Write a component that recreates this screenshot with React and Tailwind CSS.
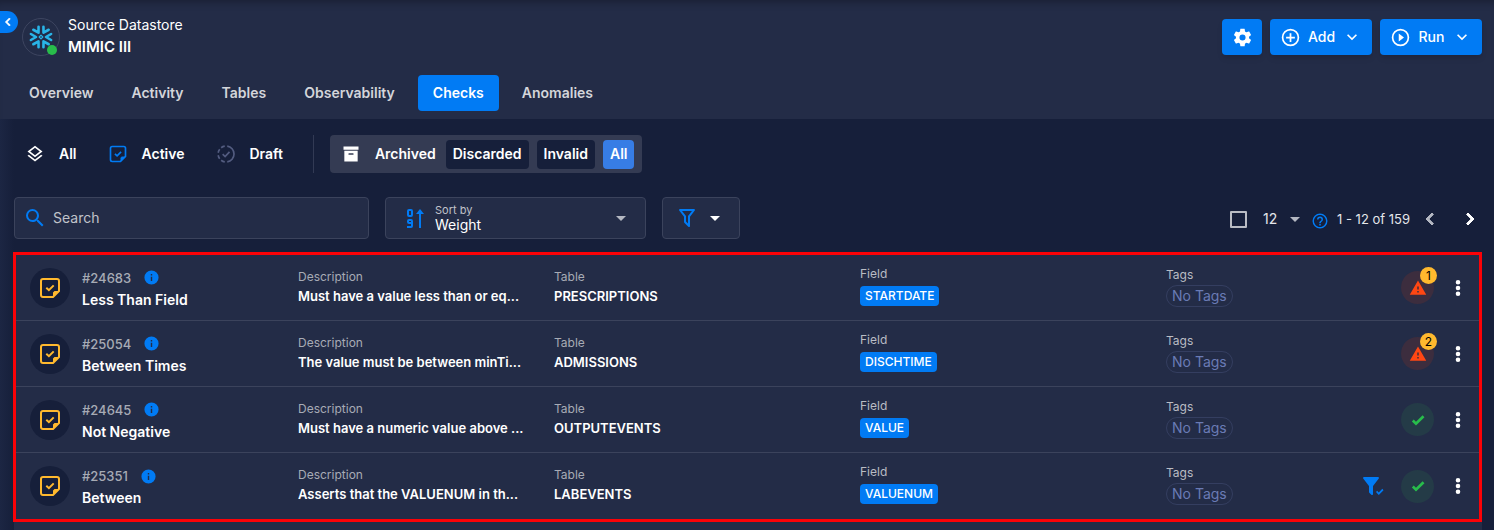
import { useState } from "react";
import { clsx } from "clsx";

const paths = {
  cog: "M12,15.5A3.5,3.5 0 0,1 8.5,12A3.5,3.5 0 0,1 12,8.5A3.5,3.5 0 0,1 15.5,12A3.5,3.5 0 0,1 12,15.5M19.43,12.97C19.47,12.65 19.5,12.33 19.5,12C19.5,11.67 19.47,11.34 19.43,11L21.54,9.37C21.73,9.22 21.78,8.95 21.66,8.73L19.66,5.27C19.54,5.05 19.27,4.96 19.05,5.05L16.56,6.05C16.04,5.66 15.5,5.32 14.87,5.07L14.5,2.42C14.46,2.18 14.25,2 14,2H10C9.75,2 9.54,2.18 9.5,2.42L9.13,5.07C8.5,5.32 7.96,5.66 7.44,6.05L4.95,5.05C4.73,4.96 4.46,5.05 4.34,5.27L2.34,8.73C2.21,8.95 2.27,9.22 2.46,9.37L4.57,11C4.53,11.34 4.5,11.67 4.5,12C4.5,12.33 4.53,12.65 4.57,12.97L2.46,14.63C2.27,14.78 2.21,15.05 2.34,15.27L4.34,18.73C4.46,18.95 4.73,19.03 4.95,18.95L7.44,17.94C7.96,18.34 8.5,18.68 9.13,18.93L9.5,21.58C9.54,21.82 9.75,22 10,22H14C14.25,22 14.46,21.82 14.5,21.58L14.87,18.93C15.5,18.67 16.04,18.34 16.56,17.94L19.05,18.95C19.27,19.03 19.54,18.95 19.66,18.73L21.66,15.27C21.78,15.05 21.73,14.78 21.54,14.63L19.43,12.97Z",
  plusCircle: "M12,20C7.59,20 4,16.41 4,12C4,7.59 7.59,4 12,4C16.41,4 20,7.59 20,12C20,16.41 16.41,20 12,20M12,2A10,10 0 0,0 2,12A10,10 0 0,0 12,22A10,10 0 0,0 22,12A10,10 0 0,0 12,2M13,7H11V11H7V13H11V17H13V13H17V11H13V7Z",
  playCircle: "M12,20C7.59,20 4,16.41 4,12C4,7.59 7.59,4 12,4C16.41,4 20,7.59 20,12C20,16.41 16.41,20 12,20M12,2A10,10 0 0,0 2,12A10,10 0 0,0 12,22A10,10 0 0,0 22,12A10,10 0 0,0 12,2M10,16.5L16,12L10,7.5V16.5Z",
  chevronDown: "M7.41,8.58L12,13.17L16.59,8.58L18,10L12,16L6,10L7.41,8.58Z",
  chevronLeft: "M15.41,16.58L10.83,12L15.41,7.41L14,6L8,12L14,18L15.41,16.58Z",
  chevronRight: "M8.59,16.58L13.17,12L8.59,7.41L10,6L16,12L10,18L8.59,16.58Z",
  layers: "M12,18.54L19.37,12.8L21,14.07L12,21.07L3,14.07L4.62,12.81L12,18.54M12,16L3,9L12,2L21,9L12,16M12,4.53L6.26,9L12,13.47L17.74,9L12,4.53Z",
  magnify: "M9.5,3A6.5,6.5 0 0,1 16,9.5C16,11.11 15.41,12.59 14.44,13.73L14.71,14H15.5L20.5,19L19,20.5L14,15.5V14.71L13.73,14.44C12.59,15.41 11.11,16 9.5,16A6.5,6.5 0 0,1 3,9.5A6.5,6.5 0 0,1 9.5,3M9.5,5C7,5 5,7 5,9.5C5,12 7,14 9.5,14C12,14 14,12 14,9.5C14,7 12,5 9.5,5Z",
  archive: "M3,3H21V7H3V3M4,8H20V21H4V8M9.5,11A0.5,0.5 0 0,0 9,11.5V13H15V11.5A0.5,0.5 0 0,0 14.5,11H9.5Z",
  filter: "M15,19.88C15.04,20.18 14.94,20.5 14.71,20.71C14.32,21.1 13.69,21.1 13.3,20.71L9.29,16.7C9.06,16.47 8.96,16.16 9,15.87V10.75L4.21,4.62C3.87,4.19 3.95,3.56 4.38,3.22C4.57,3.08 4.78,3 5,3V3H19V3C19.22,3 19.43,3.08 19.62,3.22C20.05,3.56 20.13,4.19 19.79,4.62L15,10.75V19.88M7.04,5L11,10.06V15.58L13,17.58V10.05L16.96,5H7.04Z",
  filterCheck: "M12 12V19.88C12.04 20.18 11.94 20.5 11.71 20.71C11.32 21.1 10.69 21.1 10.3 20.71L8.29 18.7C8.06 18.47 7.96 18.16 8 17.87V12H7.97L2.21 4.62C1.87 4.19 1.95 3.56 2.38 3.22C2.57 3.08 2.78 3 3 3H17C17.22 3 17.43 3.08 17.62 3.22C18.05 3.56 18.13 4.19 17.79 4.62L12.03 12H12M17.75 21L15 18L16.16 16.84L17.75 18.43L21.34 14.84L22.5 16.25L17.75 21",
  checkBold: "M9,20.42L2.79,14.21L5.62,11.38L9,14.77L18.88,4.88L21.71,7.71L9,20.42Z",
  alert: "M13,14H11V10H13M13,18H11V16H13M1,21H23L12,2L1,21Z",
  help: "M11,18H13V16H11V18M12,2A10,10 0 0,0 2,12A10,10 0 0,0 12,22A10,10 0 0,0 22,12A10,10 0 0,0 12,2M12,20C7.59,20 4,16.41 4,12C4,7.59 7.59,4 12,4C16.41,4 20,7.59 20,12C20,16.41 16.41,20 12,20M12,6A4,4 0 0,0 8,10H10A2,2 0 0,1 12,8A2,2 0 0,1 14,10C14,12 11,11.75 11,15H13C13,12.75 16,12.5 16,10A4,4 0 0,0 12,6Z",
  info: "M13,9H11V7H13M13,17H11V11H13M12,2A10,10 0 0,0 2,12A10,10 0 0,0 12,22A10,10 0 0,0 22,12A10,10 0 0,0 12,2Z",
  dots: "M12,15.5A2.3,2.3 0 0,1 14.3,17.8A2.3,2.3 0 0,1 12,20.1A2.3,2.3 0 0,1 9.7,17.8A2.3,2.3 0 0,1 12,15.5M12,9.7A2.3,2.3 0 0,1 14.3,12A2.3,2.3 0 0,1 12,14.3A2.3,2.3 0 0,1 9.7,12A2.3,2.3 0 0,1 12,9.7M12,3.9A2.3,2.3 0 0,1 14.3,6.2A2.3,2.3 0 0,1 12,8.5A2.3,2.3 0 0,1 9.7,6.2A2.3,2.3 0 0,1 12,3.9Z",
  menuDown: "M7,10L12,15L17,10H7Z",
};

function Icon({ name, className }) {
  return (
    <svg viewBox="0 0 24 24" fill="currentColor" aria-hidden="true" className={clsx("shrink-0", className)}>
      <path d={paths[name]} />
    </svg>
  );
}

function NoteCheck({ className }) {
  return (
    <svg viewBox="0 0 24 24" fill="none" stroke="currentColor" strokeWidth="2" aria-hidden="true" className={clsx("shrink-0", className)}>
      <path d="M15 21H5A2 2 0 0 1 3 19V5A2 2 0 0 1 5 3H19A2 2 0 0 1 21 5V15Z" strokeLinejoin="round" />
      <path d="M15.500 20.500V17A1.500 1.500 0 0 1 17 15.500H20.500Z" fill="currentColor" strokeWidth="1" />
      <path d="M8.300 11.800L10.900 14.200L15.700 9.400" />
    </svg>
  );
}

function DraftCheck({ className }) {
  return (
    <svg viewBox="0 0 24 24" fill="none" stroke="currentColor" strokeWidth="2" aria-hidden="true" className={clsx("shrink-0", className)}>
      <path d="M13.500 2.600A9.500 9.500 0 0 1 13.500 21.400" />
      <path d="M10.500 2.600A9.500 9.500 0 0 0 6.200 4.500M4.500 6.200A9.500 9.500 0 0 0 2.600 10.500M2.600 13.500A9.500 9.500 0 0 0 4.500 17.800M6.200 19.500A9.500 9.500 0 0 0 10.500 21.400" />
      <path d="M8 12.200L10.900 15L16.200 9.400" />
    </svg>
  );
}

function Snowflake({ className }) {
  return (
    <svg viewBox="0 0 24 24" fill="none" stroke="#29b5e8" strokeWidth="2.600" strokeLinecap="round" strokeLinejoin="round" aria-hidden="true" className={className}>
      {[0, 60, 120, 180, 240, 300].map((angle) => (
        <path key={angle} d="M1.900 9L7 12L1.900 15" transform={`rotate(${angle} 12 12)`} />
      ))}
      <rect x="10.700" y="10.700" width="2.600" height="2.600" transform="rotate(45 12 12)" strokeWidth="1.200" />
    </svg>
  );
}

function SortNumeric({ className }) {
  return (
    <svg viewBox="0 0 18 20" fill="none" stroke="currentColor" strokeWidth="2" aria-hidden="true" className={clsx("shrink-0", className)}>
      <rect x="2" y="2" width="4" height="6" rx="1" />
      <path d="M1 19H5A1 1 0 0 0 6 18V13A1 1 0 0 0 5 12H3A1 1 0 0 0 2 13V14A1 1 0 0 0 3 15H6" />
      <path d="M14 20V5" />
      <path d="M10 6L14 1L18 6Z" fill="currentColor" stroke="none" />
    </svg>
  );
}

const tabs = ["Overview", "Activity", "Tables", "Observability", "Checks", "Anomalies"];

const checks = [
  { id: "#24683", name: "Less Than Field", description: "Must have a value less than or eq...", table: "PRESCRIPTIONS", field: "STARTDATE", anomalies: 1 },
  { id: "#25054", name: "Between Times", description: "The value must be between minTi...", table: "ADMISSIONS", field: "DISCHTIME", anomalies: 2 },
  { id: "#24645", name: "Not Negative", description: "Must have a numeric value above ...", table: "OUTPUTEVENTS", field: "VALUE", anomalies: 0 },
  { id: "#25351", name: "Between", description: "Asserts that the VALUENUM in th...", table: "LABEVENTS", field: "VALUENUM", anomalies: 0, filtered: true },
];

function Header({ tab, onTab }) {
  return (
    <header className="bg-[#232c47] pb-2 shadow-[inset_0_8px_8px_-6px_rgba(0,0,0,0.3)]">
      <div className="flex items-start pr-3">
        <button type="button" aria-label="Collapse sidebar" className="mt-[11px] flex h-[22px] w-[18px] items-center rounded-r-full bg-[#017bf4] text-white">
          <Icon name="chevronLeft" className="size-4 stroke-current stroke-1" />
        </button>
        <div className="relative mt-[18px] ml-1 flex size-[38px] items-center justify-center rounded-full border border-[#3d4560]">
          <Snowflake className="size-6" />
          <span className="absolute right-[2px] bottom-0 size-[10px] rounded-full bg-[#28bd4b]" />
        </div>
        <div className="mt-[14px] ml-2 text-sm leading-[22px] text-white">
          <p>Source Datastore</p>
          <h1 className="text-[15px] leading-[22px] font-semibold">MIMIC III</h1>
        </div>
        <div className="mt-[19px] ml-auto flex gap-2 text-sm font-medium text-white">
          <button type="button" aria-label="Settings" className="flex h-9 w-10 items-center justify-center rounded bg-[#017bf4] shadow-md">
            <Icon name="cog" className="size-[21px]" />
          </button>
          <button type="button" className="flex h-9 w-[102px] items-center rounded bg-[#017bf4] pl-[10px] shadow-md">
            <Icon name="plusCircle" className="size-[21px]" />
            <span className="flex-1 text-center">Add</span>
            <Icon name="chevronDown" className="mr-[10px] size-5" />
          </button>
          <button type="button" className="flex h-9 w-[102px] items-center rounded bg-[#017bf4] pl-[10px] shadow-md">
            <Icon name="playCircle" className="size-[21px]" />
            <span className="flex-1 text-center">Run</span>
            <Icon name="chevronDown" className="mr-[10px] size-5" />
          </button>
        </div>
      </div>
      <nav className="mt-[17px] flex gap-2 px-[14px]">
        {tabs.map((name) => (
          <button
            key={name}
            type="button"
            onClick={() => onTab(name)}
            className={clsx(
              "h-9 rounded px-[15px] text-sm font-semibold",
              name === tab ? "bg-[#017bf4] text-white" : "text-[#d3d5da]"
            )}
          >
            {name}
          </button>
        ))}
      </nav>
    </header>
  );
}

function StatusFilters() {
  return (
    <div className="flex h-[38px] items-center text-sm font-semibold text-white">
      <button type="button" className="ml-[11px] flex items-center gap-[14px]">
        <Icon name="layers" className="size-5" />
        All
      </button>
      <button type="button" className="ml-[31px] flex items-center gap-[14px]">
        <NoteCheck className="size-5 text-[#017bf4]" />
        Active
      </button>
      <button type="button" className="ml-[31px] flex items-center gap-[14px]">
        <DraftCheck className="size-5 text-[#535c80]" />
        Draft
      </button>
      <span className="ml-[30px] h-full w-px bg-[#323a54]" />
      <div className="ml-4 flex h-full items-center gap-2 rounded bg-[#343b53] pr-2 pl-[11px]">
        <button type="button" className="mr-[2px] flex items-center gap-[14px]">
          <Icon name="archive" className="size-5" />
          Archived
        </button>
        <button type="button" className="h-[29px] rounded bg-[#161f3a] px-[7px]">Discarded</button>
        <button type="button" className="h-[29px] rounded bg-[#161f3a] px-[7px]">Invalid</button>
        <button type="button" className="h-[29px] rounded bg-[#377de5] px-[7px]">All</button>
      </div>
    </div>
  );
}

function Toolbar() {
  return (
    <div className="mt-6 flex items-center gap-4 text-sm">
      <div className="flex h-[42px] w-[355px] items-center gap-[6px] rounded border border-[#3b435c] bg-[#232c47] px-2">
        <Icon name="magnify" className="size-6 text-[#017bf4]" />
        <input type="search" aria-label="Search" placeholder="Search" className="min-w-0 flex-1 bg-transparent text-white outline-none placeholder:text-[#c0c3ca]" />
      </div>
      <div className="flex h-[42px] w-[261px] items-center rounded border border-[#3b435c] bg-[#232c47] pr-3 pl-5">
        <SortNumeric className="h-5 w-[18px] text-[#017bf4]" />
        <div className="ml-[11px] flex-1">
          <label htmlFor="sort" className="block text-[11px] leading-[14px] text-[#c0c3ca]">Sort by</label>
          <select id="sort" className="block w-full appearance-none bg-transparent leading-4 text-white outline-none">
            <option>Weight</option>
          </select>
        </div>
        <Icon name="menuDown" className="size-6 text-[#b4b8c2]" />
      </div>
      <button type="button" aria-label="Filters" className="flex h-[42px] w-[78px] items-center justify-center gap-1 rounded border border-[#3b435c] bg-[#232c47]">
        <Icon name="filter" className="size-6 text-[#017bf4]" />
        <Icon name="menuDown" className="size-6 text-white" />
      </button>
      <div className="ml-auto flex items-center pt-[2px] text-[#e4e6ea]">
        <input type="checkbox" aria-label="Select all" className="size-[17px] appearance-none rounded-[1px] border-2 border-[#b9bcc4] checked:bg-[#017bf4]" />
        <select aria-label="Items per page" className="ml-4 appearance-none bg-transparent outline-none">
          <option>12</option>
        </select>
        <Icon name="menuDown" className="ml-[5px] size-6 text-[#b4b8c2]" />
        <Icon name="help" className="mt-1 ml-1 size-[18px] text-[#017bf4]" />
        <span className="ml-2 text-[13px]">1 - 12 of 159</span>
        <button type="button" aria-label="Previous page" className="ml-2 text-[#b4b8c2]">
          <Icon name="chevronLeft" className="size-6 stroke-current stroke-1" />
        </button>
        <button type="button" aria-label="Next page" className="ml-4 text-white">
          <Icon name="chevronRight" className="size-6 stroke-current stroke-1" />
        </button>
      </div>
    </div>
  );
}

function CheckRow({ check }) {
  return (
    <li className="flex h-[66px] items-center border-b border-[#3b435c] pl-[14px] last:border-b-0">
      <span className="flex size-10 shrink-0 items-center justify-center rounded-full bg-[#161f3a]">
        <NoteCheck className="size-6 text-[#ffb92e]" />
      </span>
      <div className="ml-3 grid min-w-0 flex-1 grid-cols-[216fr_256fr_306fr_306fr_195fr] items-center text-[13px] text-white">
        <div className="pt-[2px]">
          <p className="flex items-center gap-3 leading-5 font-medium text-[#a7abb5]">
            {check.id}
            <Icon name="info" className="size-[17px] text-[#017bf4]" />
          </p>
          <p className="mt-[2px] text-sm leading-5 font-semibold">{check.name}</p>
        </div>
        <div className="min-w-0">
          <p className="text-xs leading-4 text-[#a7abb5]">Description</p>
          <p className="truncate leading-[22px] font-semibold">{check.description}</p>
        </div>
        <div>
          <p className="text-xs leading-4 text-[#a7abb5]">Table</p>
          <p className="leading-[22px] font-semibold">{check.table}</p>
        </div>
        <div className="pb-[6px]">
          <p className="text-xs leading-5 text-[#b9bcc4]">Field</p>
          <a href="#field" className="mt-[2px] block w-fit rounded bg-[#017bf4] px-[5px] text-xs leading-5 font-medium">{check.field}</a>
        </div>
        <div className="pb-[2px]">
          <p className="text-xs leading-4 text-[#b9bcc4]">Tags</p>
          <span className="mt-[2px] block w-fit rounded-full border border-[#343e60] px-[5px] text-sm leading-5 text-[#6a7bb5]">No Tags</span>
        </div>
      </div>
      <div className="flex w-[73px] shrink-0 items-center justify-end">
        {check.filtered && <Icon name="filterCheck" className="mr-4 size-6 text-[#017bf4]" />}
        {check.anomalies > 0 ? (
          <span className="relative flex size-[33px] items-center justify-center rounded-full bg-[#3c2d3e]">
            <Icon name="alert" className="size-[18px] text-[#ff4713]" />
            <span className="absolute -top-1 -right-[3px] flex size-[17px] items-center justify-center rounded-full bg-[#ffb92e] text-xs text-black">{check.anomalies}</span>
          </span>
        ) : (
          <span className="flex size-[33px] items-center justify-center rounded-full bg-[#243b47]">
            <Icon name="checkBold" className="size-4 text-[#28bd4b]" />
          </span>
        )}
      </div>
      <button type="button" aria-label={`Actions for ${check.name}`} className="mr-[9px] ml-3 text-white">
        <Icon name="dots" className="size-6" />
      </button>
    </li>
  );
}

export default function App() {
  const [tab, setTab] = useState("Checks");
  return (
    <div className="min-h-screen bg-[#161f3a] font-['Inter','Liberation_Sans',sans-serif]">
      <Header tab={tab} onTab={setTab} />
      <main className="bg-linear-to-r from-[#1c2643] to-[#161f3a] to-[14px] px-3 pt-4 pl-[14px]">
        <StatusFilters />
        <Toolbar />
        <section className="mt-[13px] bg-[#232c47] pb-2">
          <ul className="-ml-px border-3 border-[#fb0207]">
            {checks.map((check) => (
              <CheckRow key={check.id} check={check} />
            ))}
          </ul>
        </section>
      </main>
    </div>
  );
}
